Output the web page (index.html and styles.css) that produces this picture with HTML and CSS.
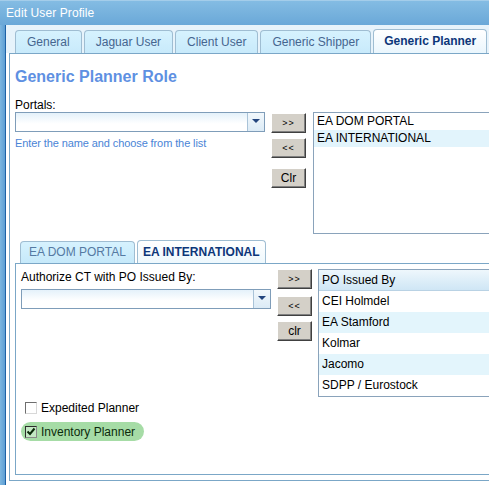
FILE: index.html
```html
<!DOCTYPE html>
<html>
<head>
<meta charset="utf-8">
<title>Edit User Profile</title>
<link rel="stylesheet" href="styles.css">
</head>
<body>
<div class="window">
  <div class="titlebar">Edit User Profile</div>
  <div class="frame">
    <div class="tabstrip">
      <div class="tab">General</div>
      <div class="tab">Jaguar User</div>
      <div class="tab">Client User</div>
      <div class="tab">Generic Shipper</div>
      <div class="tab active">Generic Planner</div>
      <div class="tab stub"></div>
    </div>
    <div class="panel">
      <h1 class="heading">Generic Planner Role</h1>
      <div class="field-label portals-label">Portals:</div>
      <div class="pick-row">
        <div class="pick-left">
          <div class="combo">
            <div class="combo-input"></div>
            <div class="combo-btn"><span class="arrow"></span></div>
          </div>
          <div class="hint">Enter the name and choose from the list</div>
        </div>
        <div class="btn-col">
          <button class="btn btn-first">&gt;&gt;</button>
          <button class="btn btn-second">&lt;&lt;</button>
          <button class="btn btn-third btn-text">Clr</button>
        </div>
        <div class="listbox">
          <div class="list-item">EA DOM PORTAL</div>
          <div class="list-item alt">EA INTERNATIONAL</div>
        </div>
      </div>

      <div class="subtabs">
        <div class="subtab">EA DOM PORTAL</div>
        <div class="subtab active">EA INTERNATIONAL</div>
      </div>
      <div class="subpanel">
        <div class="pick-row sub-row">
          <div class="pick-left">
            <div class="field-label auth-label">Authorize CT with PO Issued By:</div>
            <div class="combo sub-combo">
              <div class="combo-input"></div>
              <div class="combo-btn"><span class="arrow"></span></div>
            </div>
          </div>
          <div class="btn-col sub-btns">
            <button class="btn sub-first">&gt;&gt;</button>
            <button class="btn sub-second">&lt;&lt;</button>
            <button class="btn sub-third btn-text">clr</button>
          </div>
          <div class="grid">
            <div class="grid-head">PO Issued By</div>
            <div class="grid-row">CEI Holmdel</div>
            <div class="grid-row alt">EA Stamford</div>
            <div class="grid-row">Kolmar</div>
            <div class="grid-row alt">Jacomo</div>
            <div class="grid-row">SDPP / Eurostock</div>
          </div>
        </div>
        <div class="checks">
          <div class="check"><span class="box"></span><span>Expedited Planner</span></div>
          <div class="check checked"><span class="box"><svg width="10" height="10" viewBox="0 0 10 10"><path d="M1.5 4.5 L4 7 L8.5 1.5" fill="none" stroke="#0a2a0a" stroke-width="2"/></svg></span><span>Inventory Planner</span></div>
        </div>
      </div>
    </div>
  </div>
</div>
</body>
</html>
```

FILE: styles.css
```css
* { box-sizing: border-box; }
html, body { margin: 0; padding: 0; }
body {
  font-family: "Liberation Sans", Arial, sans-serif;
  font-size: 12px;
  color: #000;
  background: #fff;
}

.window {
  width: 489px;
  height: 485px;
  overflow: hidden;
  display: flex;
  flex-direction: column;
  background: linear-gradient(to right, #7cb6e0, #5e9ed3 5px);
}

.titlebar {
  flex: none;
  height: 25px;
  padding: 5px 0 0 6px;
  color: #fff;
  font-size: 12px;
  line-height: 14px;
  letter-spacing: 0.1px;
  background: linear-gradient(#84bce3, #6aa8d8);
  border-top: 1px solid #a4cdea;
}

.frame {
  flex: 1;
  min-height: 0;
  margin-left: 5px;
  border-left: 1px solid #1d62a6;
  background: #fff;
  display: flex;
  flex-direction: column;
}

/* top tabs */
.tabstrip {
  flex: none;
  height: 28px;
  display: flex;
  align-items: flex-end;
  gap: 2px;
  padding-left: 9px;
  background: #e7f3fb;
}
.tab {
  flex: none;
  height: 23px;
  padding: 0 11px;
  line-height: 22px;
  color: #45658f;
  background: linear-gradient(#d6f2fe, #c8eafb);
  border: 1px solid #9fbdd2;
  border-bottom: none;
  border-radius: 4px 4px 0 0;
}
.tab.active {
  height: 24px;
  line-height: 23px;
  padding: 0 10px;
  font-weight: bold;
  color: #0d3679;
  background: linear-gradient(#ffffff, #eaf6fd);
}
.tab.stub { width: 30px; }

.panel {
  flex: 1;
  min-height: 0;
  margin: 0 0 4px 3px;
  border: 1px solid #7ba7c7;
  border-right: none;
  padding: 13px 0 5px 5px;
  display: flex;
  flex-direction: column;
}

.heading {
  margin: 0;
  font-size: 16px;
  line-height: 20px;
  font-weight: bold;
  color: #5e90e2;
}

.field-label { line-height: 14px; }
.portals-label { margin-top: 11px; }

.pick-row {
  display: flex;
  align-items: flex-start;
  flex: none;
}
.pick-left { flex: none; width: 250px; }

.combo {
  display: flex;
  height: 20px;
  border: 1px solid #7f9db9;
}
.combo-input {
  flex: 1;
  background: linear-gradient(#e4f1fa, #ffffff 60%);
}
.combo-btn {
  flex: none;
  width: 17px;
  border-left: 1px solid #a9c3d8;
  background: linear-gradient(#f2f8fc, #dcebf6);
  display: flex;
  align-items: center;
  justify-content: center;
}
.arrow {
  width: 0;
  height: 0;
  border-left: 4px solid transparent;
  border-right: 4px solid transparent;
  border-top: 4px solid #23457e;
  margin-top: -2px;
}

.hint {
  margin-top: 5px;
  font-size: 11px;
  line-height: 13px;
  letter-spacing: -0.1px;
  color: #4a84d6;
}

.btn-col {
  flex: none;
  width: 35px;
  margin-left: 6px;
  display: flex;
  flex-direction: column;
}
.btn {
  width: 35px;
  height: 20px;
  padding: 0;
  margin: 0;
  font-family: "Liberation Sans", Arial, sans-serif;
  font-size: 9px;
  letter-spacing: 1px;
  color: #000;
  background: #d4d0c8;
  border: 1px solid;
  border-color: #ffffff #404040 #404040 #ffffff;
  box-shadow: inset -1px -1px 0 #808080;
}
.btn-text { font-size: 12px; letter-spacing: 0; }
.btn-first { margin-top: 1px; }
.btn-second { margin-top: 5px; }
.btn-third { margin-top: 10px; }

.listbox {
  flex: none;
  width: 200px;
  height: 122px;
  margin-left: 7px;
  border: 1px solid #8aa3bb;
  background: #fff;
}
.list-item {
  height: 17px;
  line-height: 17px;
  padding-left: 3px;
}
.list-item.alt { background: #e2f4fc; }

/* inner tabs */
.subtabs {
  flex: none;
  display: flex;
  align-items: flex-end;
  height: 29px;
  padding-left: 5px;
  gap: 2px;
}
.subtab {
  flex: none;
  height: 22px;
  line-height: 21px;
  padding: 0 8px;
  color: #557aa3;
  background: linear-gradient(#d6f2fe, #c6e9fa);
  border: 1px solid #9fbdd2;
  border-bottom: none;
  border-radius: 4px 4px 0 0;
}
.subtab.active {
  height: 23px;
  line-height: 22px;
  padding: 0 5px;
  font-weight: bold;
  color: #0d3679;
  background: linear-gradient(#ffffff, #eef8fd);
}

.subpanel {
  flex: 1;
  width: 490px;
  border: 1px solid #7ba7c7;
  padding: 5px 0 0 5px;
}

.auth-label { margin-top: 1px; }
.sub-combo { margin-top: 5px; }

.sub-btns { margin-left: 6px; }
.sub-first { margin-top: 0; }
.sub-second { margin-top: 7px; }
.sub-third { margin-top: 5px; }

.grid {
  flex: none;
  width: 200px;
  margin-left: 6px;
  border: 1px solid #8aa3bb;
  background: #fff;
}
.grid-head {
  height: 21px;
  line-height: 21px;
  padding-left: 3px;
  background: linear-gradient(#eef7fc, #cfe6f5);
  border-bottom: 1px solid #b9d2e4;
}
.grid-row {
  height: 21px;
  line-height: 21px;
  padding-left: 3px;
}
.grid-row.alt { background: #e3f5fc; }

.checks {
  display: flex;
  flex-direction: column;
  align-items: flex-start;
  margin-top: 3px;
}
.check {
  display: flex;
  align-items: center;
  height: 16px;
  padding-left: 4px;
  gap: 4px;
}
.box {
  width: 12px;
  height: 12px;
  border: 1px solid;
  border-color: #6e6e6e #d8d8d8 #d8d8d8 #6e6e6e;
  background: #fff;
  display: flex;
  align-items: center;
  justify-content: center;
}
.check.checked {
  margin-top: 6px;
  height: 19px;
  padding-right: 9px;
  border-radius: 10px;
  background: #a6dca6;
  color: #0c2a0c;
}
.check.checked .box {
  border-color: #2c2c2c #8a8a8a #8a8a8a #2c2c2c;
  background: #c4e8c4;
}
```
